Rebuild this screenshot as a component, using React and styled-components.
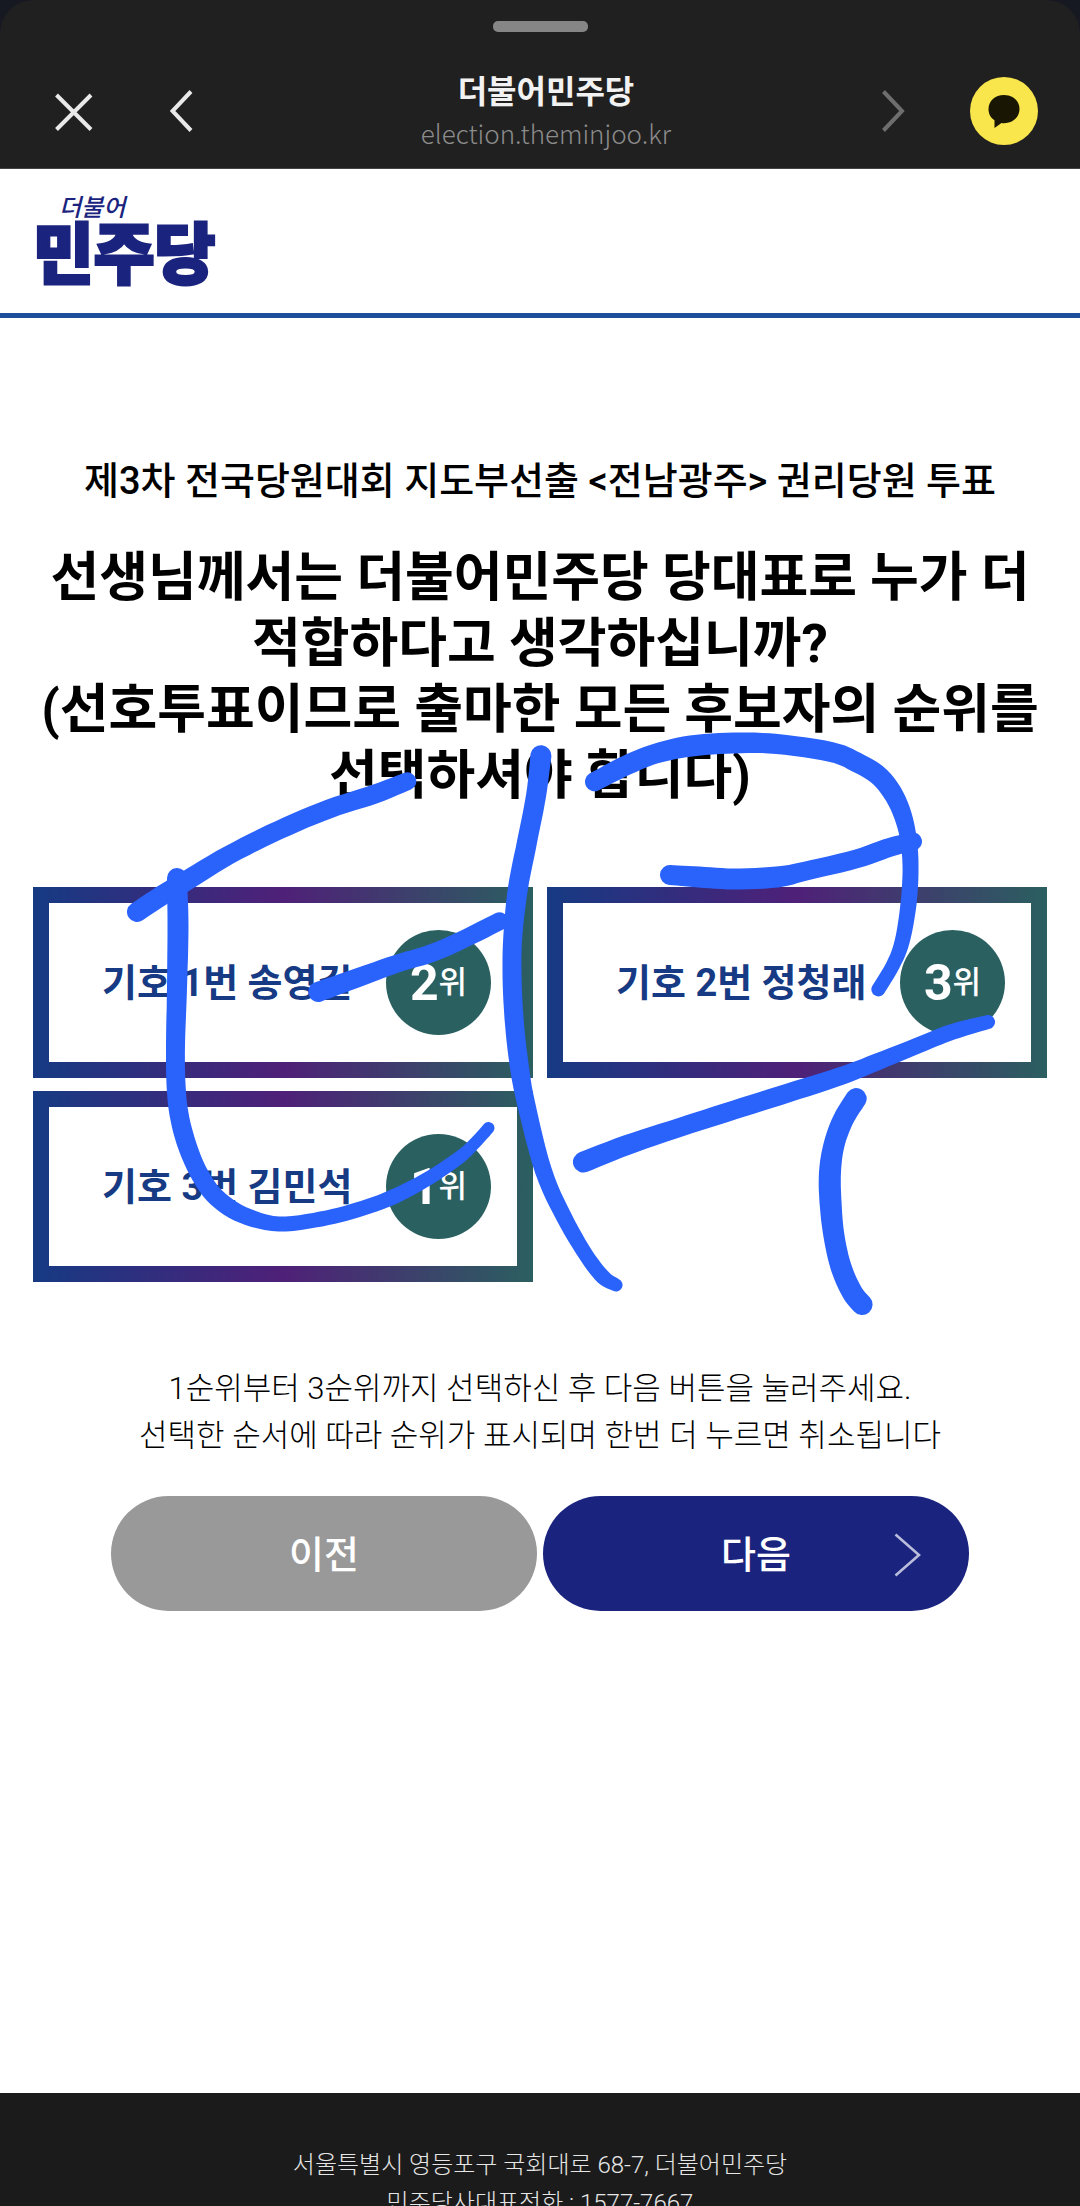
import styled, { createGlobalStyle } from 'styled-components';

const GlobalStyle = createGlobalStyle`
  * {
    box-sizing: border-box;
  }
  body {
    margin: 0;
    background: #171922;
    font-family: Roboto, "Noto Sans CJK KR", sans-serif;
  }
  button {
    border: 0;
    padding: 0;
    font: inherit;
    cursor: pointer;
  }
`;

/* in-app browser frame */

const Shell = styled.div`
  position: relative;
  display: flex;
  flex-direction: column;
  height: 100vh;
  overflow: hidden;
`;

const BrowserHeader = styled.header`
  flex: none;
  padding-top: 21px;
  background: #202020;
  border-bottom: 1px solid #454545;
  border-radius: 34px 34px 0 0;
`;

const Handle = styled.div`
  width: 95px;
  height: 11px;
  margin: 0 auto 22px;
  border-radius: 5px;
  background: #868686;
`;

const BrowserBar = styled.div`
  display: grid;
  grid-template-columns: 1fr auto 1fr;
  align-items: center;
  height: 114px;
  padding: 0 42px 0 54px;
`;

const BarGroup = styled.div`
  display: flex;
  align-items: center;
  gap: ${(p) => p.$gap};
  justify-content: ${(p) => (p.$end ? 'flex-end' : 'flex-start')};
`;

const BarButton = styled.button`
  display: flex;
  background: none;
  color: ${(p) => (p.$dim ? '#6e6e6e' : '#e9e9e9')};
`;

const TalkButton = styled.button`
  display: flex;
  align-items: center;
  justify-content: center;
  width: 68px;
  height: 68px;
  border-radius: 50%;
  background: #f9e54c;
`;

const SiteInfo = styled.div`
  text-align: center;
`;

const SiteTitle = styled.div`
  font-size: 32px;
  line-height: 44px;
  font-weight: 700;
  color: #f2f2f2;
`;

const SiteUrl = styled.div`
  font-family: "Noto Sans CJK KR", sans-serif;
  font-size: 26px;
  line-height: 38px;
  font-weight: 300;
  color: #8c8c8c;
`;

/* web page */

const WebView = styled.div`
  flex: 1;
  min-height: 0;
  overflow-y: auto;
  scrollbar-width: none;
  background: #fff;
`;

const SiteHeader = styled.div`
  display: flex;
  align-items: flex-end;
  height: 149px;
  padding: 0 33px 26px;
  border-bottom: 5px solid #1f4e9a;
`;

const Logo = styled.a`
  display: flex;
  flex-direction: column;
  color: #1a237e;
  text-decoration: none;
`;

const LogoScript = styled.span`
  padding-left: 26px;
  font-size: 24px;
  line-height: 34px;
  font-style: italic;
  font-weight: 500;
`;

const LogoName = styled.span`
  font-size: 66px;
  line-height: 62px;
  font-weight: 900;
  -webkit-text-stroke: 3px #1a237e;
`;

const Main = styled.main`
  padding: 138px 33px 482px;
  text-align: center;
  word-break: keep-all;
`;

const PollName = styled.p`
  margin: 0;
  font-size: 38px;
  line-height: 50px;
  font-weight: 500;
  color: #000;
`;

const Question = styled.h1`
  margin: 39px 0 78px;
  font-size: 53px;
  line-height: 66px;
  font-weight: 700;
  color: #000;
`;

const Candidates = styled.div`
  display: grid;
  grid-template-columns: 1fr 1fr;
  gap: 13px 14px;
`;

const Candidate = styled.button`
  display: flex;
  align-items: center;
  justify-content: space-between;
  height: 191px;
  padding: 0 26px 0 53px;
  border: 16px solid;
  border-image: linear-gradient(to right, #163a83, #4f2078, #2b5f60) 16;
  background: #fff;
  font-size: 38px;
  line-height: 50px;
  font-weight: 700;
  color: #163a83;
`;

const Rank = styled.span`
  display: flex;
  align-items: center;
  justify-content: center;
  width: 105px;
  height: 105px;
  border-radius: 50%;
  background: #2b6061;
  color: #fff;
  font-size: 31px;
  font-weight: 500;

  strong {
    font-size: 50px;
    font-weight: 700;
  }
`;

const Hint = styled.p`
  margin: 83px 0 37px;
  font-size: 31px;
  line-height: 47px;
  font-weight: 300;
  color: #000;
`;

const Actions = styled.div`
  display: flex;
  justify-content: center;
  gap: 6px;
`;

const Action = styled.button`
  display: grid;
  grid-template-columns: 1fr auto 1fr;
  align-items: center;
  width: 426px;
  height: 115px;
  padding: 3px 48px 0;
  border-radius: 58px;
  background: ${(p) => (p.$primary ? '#1a247f' : '#999')};
  font-size: 38px;
  line-height: 50px;
  font-weight: 500;
  color: #fff;

  span {
    grid-column: 2;
  }
  svg {
    justify-self: end;
  }
`;

const Footer = styled.footer`
  padding: 53px 33px;
  background: #1b1b1b;
  color: #e6e6e6;
  text-align: center;
  font-size: 24px;
  line-height: 38px;
  font-weight: 300;

  p {
    margin: 0;
  }
`;

const Ink = styled.svg`
  position: absolute;
  inset: 0;
  width: 100%;
  height: 100%;
  pointer-events: none;
  fill: #2a62fc;
`;

const candidates = [
  { no: 1, name: '송영길', rank: 2 },
  { no: 2, name: '정청래', rank: 3 },
  { no: 3, name: '김민석', rank: 1 },
];

// pen strokes as [x, y, pen radius]
const strokes = [
  [[137, 912, 10], [161, 896, 10], [186, 881, 10], [229, 855, 9.5], [279, 830, 9.5], [329, 809, 9.5], [375, 794, 9.5], [408, 781, 9]],
  [[177, 878, 10], [178, 927, 10.5], [177, 988, 10], [175.5, 1045, 9.5], [176, 1084, 9.5], [179, 1114, 9.5], [187, 1145, 9.5], [200, 1175, 9], [217, 1198, 9], [243, 1215, 8.5], [279, 1224, 7.5], [321, 1219, 7.5], [357, 1210, 7.5], [393, 1197, 7.5], [429, 1178, 7], [460, 1157, 6.5], [475, 1143, 6], [488.5, 1128, 6]],
  [[318, 992, 10], [357, 978, 9.5], [396, 964, 9], [432, 953, 9], [464, 939, 9], [500, 921, 9]],
  [[541, 755, 10.5], [536, 796, 10], [527, 842, 10], [518, 888, 10], [513, 934, 9.5], [512, 972, 9.5], [514, 1018, 9.5], [519, 1064, 9.5], [526, 1103, 9], [543.5, 1171, 8.5], [564, 1217, 8], [586, 1255, 7.5], [603, 1277, 7.5], [616, 1285, 6.5]],
  [[594, 782, 9.5], [627, 765, 10], [656, 753.5, 10], [691, 746, 10.5], [734, 743, 10.5], [777, 744, 10], [831, 752, 10], [856, 762, 10], [880, 777, 10], [897, 801, 9.5], [907, 831, 8.5], [910.5, 865, 8], [908.5, 904, 8], [902, 942, 7.5], [893, 965, 7], [878, 990, 7]],
  [[670, 875, 10], [699, 877, 10.5], [734, 879, 10.5], [777, 877, 10.5], [806, 871, 9.5], [856, 859, 9.5], [891, 847, 9.5], [913, 841.5, 9]],
  [[583.5, 1162, 10.5], [627, 1145, 10], [681, 1127, 9.5], [734, 1110, 9.5], [788, 1093, 9.5], [841, 1076, 9], [877, 1062, 8.5], [924, 1043, 8], [952, 1032, 8], [988, 1022, 7]],
  [[856.5, 1098, 10.5], [843, 1120, 10.5], [834, 1145, 10.5], [830, 1172, 11], [830.5, 1202, 11], [834, 1236, 10.5], [841, 1267, 10.5], [852, 1292, 10.5], [862, 1304.5, 10.5]],
];

function spline(a, b, c, d, t) {
  return 0.5 * (2 * b + (c - a) * t + (2 * a - 5 * b + 4 * c - d) * t * t + (3 * b - a - 3 * c + d) * t * t * t);
}

// outline of a round pen that changes width along the stroke
function outline(points) {
  const samples = [];
  for (let i = 0; i < points.length - 1; i++) {
    const quad = [points[i - 1] || points[i], points[i], points[i + 1], points[i + 2] || points[i + 1]];
    for (let s = 0; s < 6; s++) {
      samples.push([0, 1, 2].map((k) => spline(...quad.map((q) => q[k]), s / 6)));
    }
  }
  samples.push(points[points.length - 1]);

  const side = (sign) =>
    samples.map(([x, y, r], i) => {
      const from = samples[Math.max(i - 1, 0)];
      const to = samples[Math.min(i + 1, samples.length - 1)];
      const angle = Math.atan2(to[1] - from[1], to[0] - from[0]);
      return `${(x - sign * r * Math.sin(angle)).toFixed(1)} ${(y + sign * r * Math.cos(angle)).toFixed(1)}`;
    });

  const left = side(-1);
  const right = side(1).reverse();
  const first = points[0][2];
  const last = points[points.length - 1][2];
  return `M${left.join('L')}A${last} ${last} 0 0 1 ${right.join('L')}A${first} ${first} 0 0 1 ${left[0]}Z`;
}

const App = () => {
  return (
    <Shell>
      <GlobalStyle />
      <BrowserHeader>
        <Handle />
        <BrowserBar>
          <BarGroup $gap="76px">
            <BarButton aria-label="닫기">
              <svg width="40" height="40" viewBox="0 0 40 40" fill="none" stroke="currentColor" strokeWidth="4">
                <path d="M2.500 4L37 38.500M37 4L2.500 38.500" />
              </svg>
            </BarButton>
            <BarButton aria-label="뒤로">
              <svg width="24" height="42" viewBox="0 0 24 42" fill="none" stroke="currentColor" strokeWidth="4">
                <path d="M21 1.500L2.500 21L21 40.500" />
              </svg>
            </BarButton>
          </BarGroup>
          <SiteInfo>
            <SiteTitle>더불어민주당</SiteTitle>
            <SiteUrl>election.theminjoo.kr</SiteUrl>
          </SiteInfo>
          <BarGroup $gap="65px" $end>
            <BarButton $dim aria-label="앞으로">
              <svg width="24" height="42" viewBox="0 0 24 42" fill="none" stroke="currentColor" strokeWidth="4">
                <path d="M2.500 1.500L21 21L2.500 40.500" />
              </svg>
            </BarButton>
            <TalkButton aria-label="카카오톡 공유">
              <svg width="32" height="34" viewBox="0 0 32 34" fill="#191703">
                <path d="M16 1C7 1 .5 7 .5 15c0 5 2.300 9 6 11.200V34l7-5c.8.2 1.700.2 2.500.2 9 0 15.500-6.200 15.500-14.200S25 1 16 1z" />
              </svg>
            </TalkButton>
          </BarGroup>
        </BrowserBar>
      </BrowserHeader>

      <WebView>
        <SiteHeader>
          <Logo href="#">
            <LogoScript>더불어</LogoScript>
            <LogoName>민주당</LogoName>
          </Logo>
        </SiteHeader>

        <Main>
          <PollName>제3차 전국당원대회 지도부선출 &lt;전남광주&gt; 권리당원 투표</PollName>
          <Question>
            선생님께서는 더불어민주당 당대표로 누가 더 적합하다고 생각하십니까?
            <br />
            (선호투표이므로 출마한 모든 후보자의 순위를 선택하셔야 합니다)
          </Question>

          <Candidates>
            {candidates.map((c) => (
              <Candidate key={c.no}>
                <span>
                  기호 {c.no}번 {c.name}
                </span>
                <Rank>
                  <strong>{c.rank}</strong>위
                </Rank>
              </Candidate>
            ))}
          </Candidates>

          <Hint>
            1순위부터 3순위까지 선택하신 후 다음 버튼을 눌러주세요.
            <br />
            선택한 순서에 따라 순위가 표시되며 한번 더 누르면 취소됩니다
          </Hint>

          <Actions>
            <Action>
              <span>이전</span>
            </Action>
            <Action $primary>
              <span>다음</span>
              <svg width="27" height="44" viewBox="0 0 27 44" fill="none" stroke="#b9bcdb" strokeWidth="2.6">
                <path d="M1.500 1.500L25 22L1.500 42.500" />
              </svg>
            </Action>
          </Actions>
        </Main>

        <Footer>
          <p>서울특별시 영등포구 국회대로 68-7, 더불어민주당</p>
          <p>민주당사대표전화 : 1577-7667</p>
        </Footer>
      </WebView>

      <Ink viewBox="0 0 1080 2206" preserveAspectRatio="xMidYMin meet" aria-hidden="true">
        {strokes.map((points, i) => (
          <path key={i} d={outline(points)} />
        ))}
      </Ink>
    </Shell>
  );
};

export default App;
